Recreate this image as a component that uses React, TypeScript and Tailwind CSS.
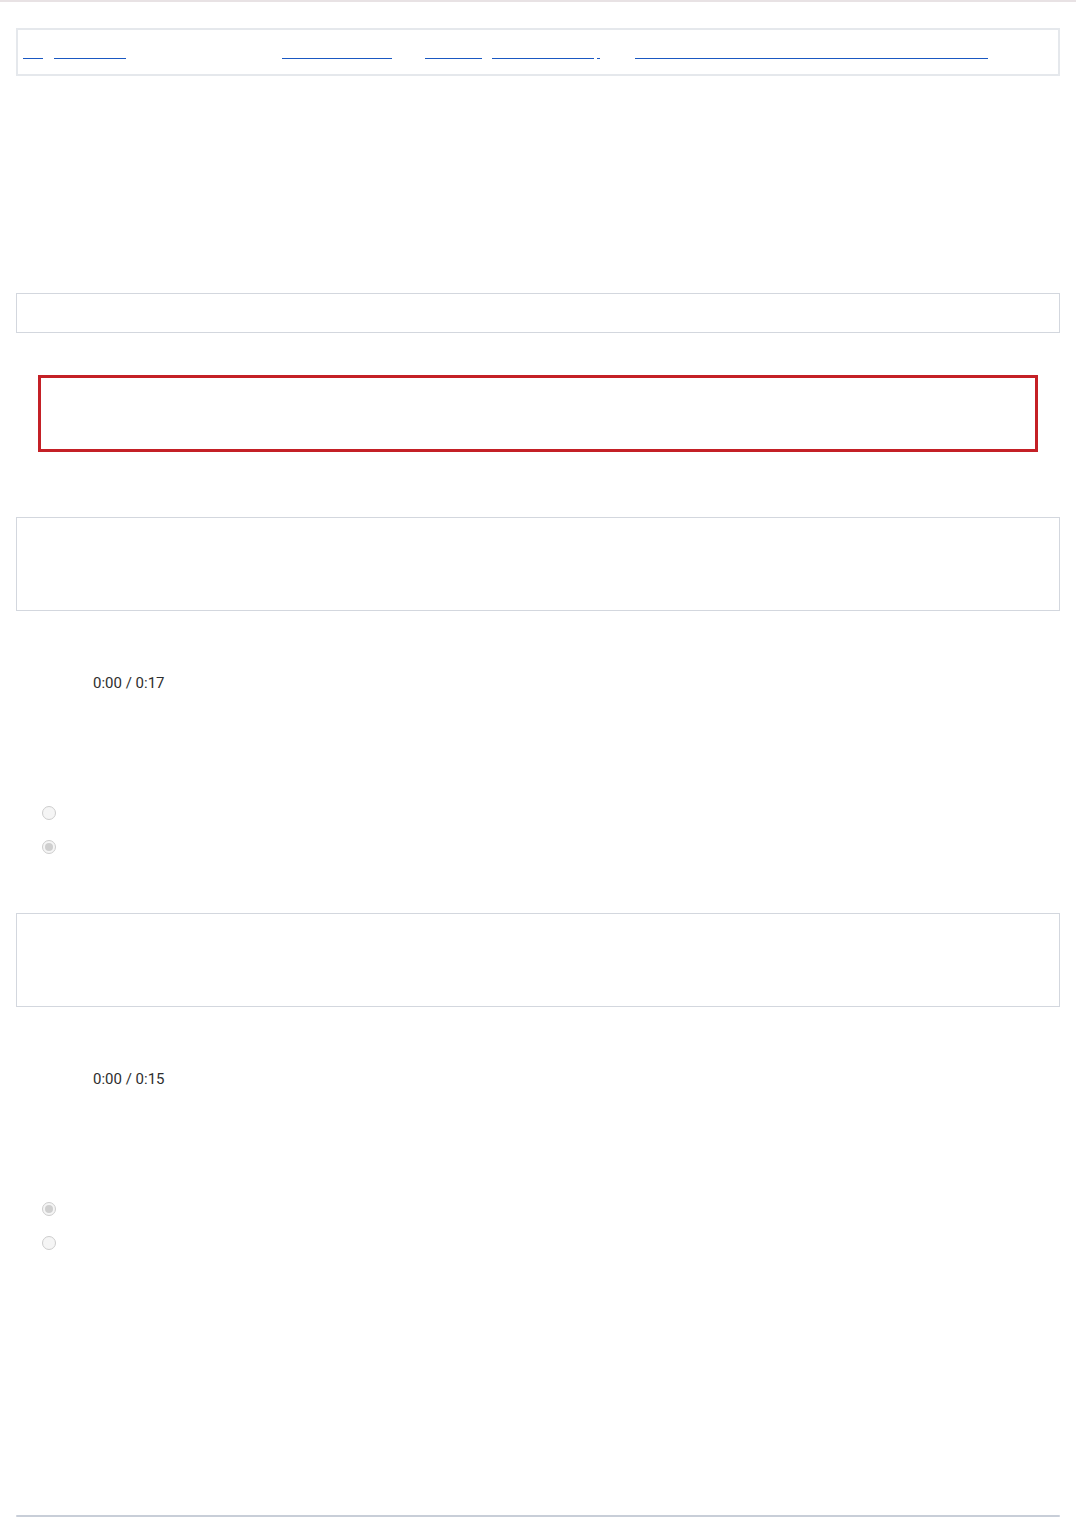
const links = [
  { ml: 'ml-[5px]', w: 'w-[20px]' },
  { ml: 'ml-[11px]', w: 'w-[72px]' },
  { ml: 'ml-[156px]', w: 'w-[110px]' },
  { ml: 'ml-[33px]', w: 'w-[57px]' },
  { ml: 'ml-[10px]', w: 'w-[102px]' },
  { ml: 'ml-[3px]', w: 'w-[3px]' },
  { ml: 'ml-[35px]', w: 'w-[353px]' },
];

function Radio({ checked }: { checked?: boolean }) {
  return (
    <div className="ml-[26px] flex h-[14px] w-[14px] items-center justify-center rounded-full border border-[#cdcdcd] bg-[#f5f5f5]">
      {checked && <div className="h-[8px] w-[8px] rounded-full bg-[#cfcfcf]" />}
    </div>
  );
}

function Question({ duration, topChecked }: { duration: string; topChecked: boolean }) {
  return (
    <div>
      <div className="h-[94px] border border-[#d3d7de]" />
      <div className="mt-[62px] pl-[77px] text-[15px] leading-5 text-[#2e2e2e]">0:00 / {duration}</div>
      <div className="mt-[113px]">
        <Radio checked={topChecked} />
        <div className="mt-[20px]">
          <Radio checked={!topChecked} />
        </div>
      </div>
    </div>
  );
}

export default function App() {
  return (
    <div className="min-h-[1517px] border-t-2 border-[#e8e2e4] bg-white font-['Roboto',sans-serif]">
      <div className="px-4">
        <div className="mt-[26px] flex h-12 items-start border-2 border-[#e5e8ec] pt-[28px]">
          {links.map((l, i) => (
            <span key={i} className={`${l.ml} ${l.w} h-px bg-[#1a58c2]`} />
          ))}
        </div>

        <div className="mt-[217px] h-10 border border-[#d3d7de]" />

        <div className="mx-[22px] mt-[42px] h-[77px] border-[3px] border-[#c42026]" />

        <div className="mt-[65px]">
          <Question duration="0:17" topChecked={false} />
        </div>

        <div className="mt-[59px]">
          <Question duration="0:15" topChecked={true} />
        </div>

        <div className="mt-[265px] h-[2px] rounded-full bg-[#c8ced8]" />
      </div>
    </div>
  );
}
